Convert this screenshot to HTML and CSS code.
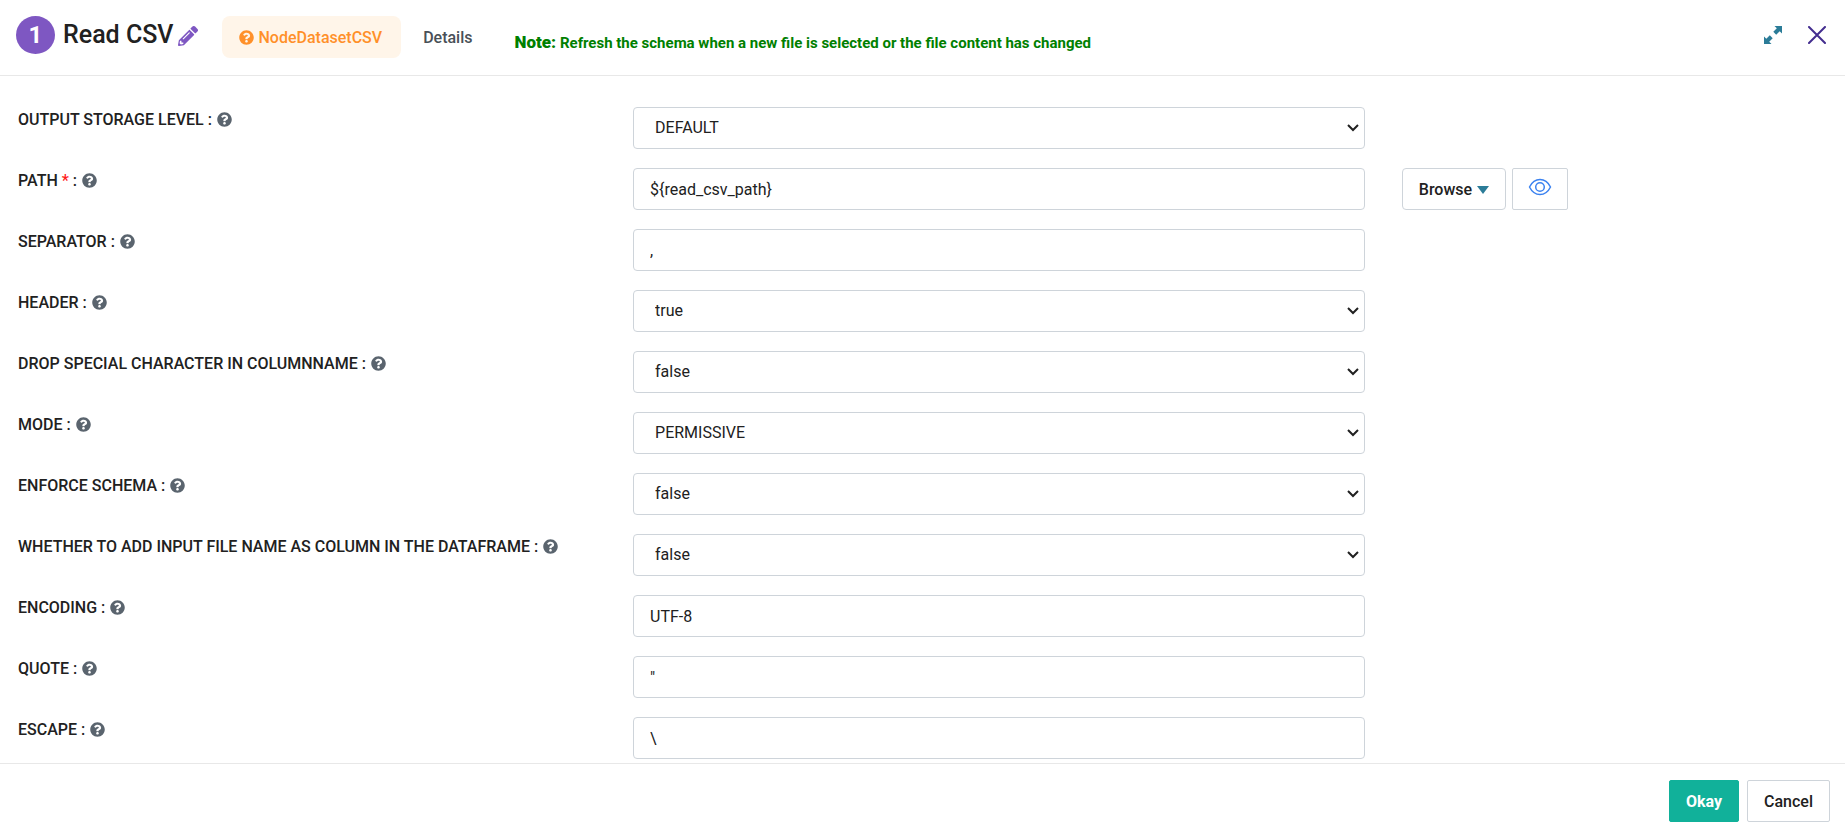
FILE: index.html
```html
<!DOCTYPE html>
<html lang="en">
<head>
<meta charset="utf-8">
<meta name="viewport" content="width=device-width, initial-scale=1">
<title>Read CSV</title>
<link rel="stylesheet" href="styles.css">
</head>
<body>
<svg class="sprite" aria-hidden="true">
  <symbol id="help" viewBox="0 0 512 512"><path fill="currentColor" d="M504 256c0 137-111 248-248 248S8 393 8 256C8 119.100 119 8 256 8s248 111.100 248 248zM262.700 90c-54.500 0-89.300 23-116.500 63.800-3.600 5.300-2.400 12.400 2.700 16.300l34.700 26.300c5.200 3.900 12.600 3 16.700-2.100 17.800-22.600 30.100-35.800 57.300-35.800 20.400 0 45.700 13.100 45.700 33 0 15-12.400 22.700-32.500 34C247.100 238.500 216 254.900 216 296v4c0 6.600 5.400 12 12 12h56c6.600 0 12-5.400 12-12v-1.300c0-28.500 83.200-29.600 83.200-106.700 0-58-60.200-102-116.500-102zM256 338c-25.400 0-46 20.600-46 46s20.600 46 46 46 46-20.600 46-46-20.600-46-46-46z"/></symbol>
</svg>
<main class="dialog">
  <header class="header">
    <span class="badge">1</span>
    <h1 class="title">Read CSV</h1>
    <button class="icon-button edit" type="button" aria-label="Edit name">
      <svg width="20" height="20" viewBox="0 0 512 512"><path fill="currentColor" d="M498 142l-46 46c-5 5-12 5-17 0L324 77c-5-5-5-12 0-17l46-46c19-19 49-19 68 0l60 60c19 19 19 49 0 68zm-214-42L22 362 0 484c-3 16 12 31 28 28l122-22 262-262c5-5 5-12 0-17L301 100c-5-5-12-5-17 0zM124 340c-5-6-5-14 0-20l154-154c6-5 14-5 20 0s5 14 0 20L144 340c-6 5-14 5-20 0zm-36 84h48v36l-64 12-32-32 12-64h36v48z"/></svg>
    </button>
    <nav class="tabs">
      <a class="tab tab-active" href="#node"><svg class="help"><use href="#help"/></svg>NodeDatasetCSV</a>
      <a class="tab" href="#details">Details</a>
    </nav>
    <p class="note"><strong class="note-lead">Note:</strong> Refresh the schema when a new file is selected or the file content has changed</p>
    <div class="window-actions">
      <button class="icon-button expand" type="button" aria-label="Expand">
        <svg width="18" height="18" viewBox="0 0 18 18"><path fill="currentColor" d="M10.500 0H18v7.500l-2.300-2.300-3.500 3.500-2.900-2.900 3.500-3.500zM7.500 18H0v-7.500l2.300 2.300 3.500-3.500 2.900 2.900-3.500 3.500z"/></svg>
      </button>
      <button class="icon-button close" type="button" aria-label="Close">
        <svg width="18" height="18" viewBox="0 0 18 18"><path d="M1 1l16 16M17 1L1 17" fill="none" stroke="currentColor" stroke-width="2" stroke-linecap="round"/></svg>
      </button>
    </div>
  </header>

  <form class="form" id="csv-form">
    <div class="row">
      <label class="label" for="storage">OUTPUT STORAGE LEVEL : <svg class="help"><use href="#help"/></svg></label>
      <select class="field" id="storage"><option>DEFAULT</option></select>
    </div>
    <div class="row">
      <label class="label" for="path">PATH <span class="required">*</span> : <svg class="help"><use href="#help"/></svg></label>
      <input class="field" id="path" type="text" value="${read_csv_path}">
      <div class="row-actions">
        <button class="button browse" type="button">Browse<svg width="12" height="8" viewBox="0 0 12 8"><path fill="#2b7c98" d="M0 0h12L6 8z"/></svg></button>
        <button class="button preview" type="button" aria-label="Preview file">
          <svg width="24" height="18" viewBox="0 0 24 18" fill="none" stroke="#3b82f0" stroke-width="1.500"><path d="M1.500 9C4 4 7.500 1.500 12 1.500S20 4 22.500 9C20 14 16.500 16.500 12 16.500S4 14 1.500 9z"/><circle cx="12" cy="9" r="4.300"/></svg>
        </button>
      </div>
    </div>
    <div class="row">
      <label class="label" for="separator">SEPARATOR : <svg class="help"><use href="#help"/></svg></label>
      <input class="field" id="separator" type="text" value=",">
    </div>
    <div class="row">
      <label class="label" for="has-header">HEADER : <svg class="help"><use href="#help"/></svg></label>
      <select class="field" id="has-header"><option>true</option><option>false</option></select>
    </div>
    <div class="row">
      <label class="label" for="drop-special">DROP SPECIAL CHARACTER IN COLUMNNAME : <svg class="help"><use href="#help"/></svg></label>
      <select class="field" id="drop-special"><option>false</option><option>true</option></select>
    </div>
    <div class="row">
      <label class="label" for="mode">MODE : <svg class="help"><use href="#help"/></svg></label>
      <select class="field" id="mode"><option>PERMISSIVE</option></select>
    </div>
    <div class="row">
      <label class="label" for="enforce">ENFORCE SCHEMA : <svg class="help"><use href="#help"/></svg></label>
      <select class="field" id="enforce"><option>false</option><option>true</option></select>
    </div>
    <div class="row">
      <label class="label" for="add-name">WHETHER TO ADD INPUT FILE NAME AS COLUMN IN THE DATAFRAME : <svg class="help"><use href="#help"/></svg></label>
      <select class="field" id="add-name"><option>false</option><option>true</option></select>
    </div>
    <div class="row">
      <label class="label" for="encoding">ENCODING : <svg class="help"><use href="#help"/></svg></label>
      <input class="field" id="encoding" type="text" value="UTF-8">
    </div>
    <div class="row">
      <label class="label" for="quote">QUOTE : <svg class="help"><use href="#help"/></svg></label>
      <input class="field" id="quote" type="text" value="&quot;">
    </div>
    <div class="row">
      <label class="label" for="escape">ESCAPE : <svg class="help"><use href="#help"/></svg></label>
      <input class="field" id="escape" type="text" value="\">
    </div>
  </form>

  <footer class="footer">
    <button class="button okay" type="submit" form="csv-form">Okay</button>
    <button class="button" type="button">Cancel</button>
  </footer>
</main>
</body>
</html>
```
FILE: styles.css
```css
* {
  box-sizing: border-box;
}

body {
  margin: 0;
  background: #fff;
  color: #212121;
  font: 400 16px/24px Roboto, "Liberation Sans", sans-serif;
}

.sprite {
  display: none;
}

.dialog {
  display: flex;
  flex-direction: column;
  height: 100vh;
}

.header {
  display: flex;
  align-items: flex-start;
  flex-shrink: 0;
  padding: 16px 19px 17px 16px;
  border-bottom: 1px solid #e8e8e8;
}

.badge {
  width: 39px;
  height: 38px;
  border-radius: 50%;
  background: #7e57c2;
  color: #fff;
  font-size: 24px;
  font-weight: 700;
  line-height: 38px;
  text-align: center;
}

.title {
  margin: 0 0 0 8px;
  font-size: 25px;
  font-weight: 500;
  line-height: 38px;
}

.icon-button {
  display: flex;
  padding: 0;
  border: 0;
  background: none;
  cursor: pointer;
}

.edit {
  margin: 10px 24px 0 4px;
  color: #7e57c2;
}

.tabs {
  display: flex;
  gap: 5px;
}

.tab {
  display: flex;
  align-items: center;
  gap: 5px;
  height: 42px;
  padding: 1px 17px 0;
  border-radius: 8px;
  color: #495057;
  font-weight: 500;
  text-decoration: none;
}

.tab-active {
  padding-right: 19px;
  background: #fff5e9;
  color: #ff9029;
}

.note {
  margin: 14px 0 0 25px;
  color: #008000;
  font-size: 15px;
  font-weight: 700;
}

.note-lead {
  font-size: 17px;
}

.window-actions {
  display: flex;
  gap: 26px;
  margin: 10px 0 0 auto;
}

.expand {
  color: #2b7c98;
}

.close {
  color: #432d8f;
}

.help {
  width: 15px;
  height: 15px;
}

.form {
  display: flex;
  flex: 1;
  flex-direction: column;
  gap: 19px;
  min-height: 0;
  padding: 31px 18px 0;
  overflow: hidden;
}

.row {
  display: grid;
  grid-template-columns: 34% 40.45% 1fr;
  align-items: start;
}

.label {
  padding-top: 1px;
  font-weight: 500;
}

.label .help {
  margin-left: 1px;
  color: #5a646e;
  vertical-align: -2px;
}

.required {
  color: #ff1a1a;
}

.field {
  width: 100%;
  height: 42px;
  padding: 0 16px;
  border: 1px solid #ced4da;
  border-radius: 4px;
  background: #fff;
  color: #212121;
  font: inherit;
}

select.field {
  padding: 0 24px 0 21px;
  appearance: none;
  background: #fff url("data:image/svg+xml,%3Csvg xmlns='http://www.w3.org/2000/svg' width='12' height='8' viewBox='0 0 12 8'%3E%3Cpath d='M1 1l5 5 5-5' fill='none' stroke='%23212121' stroke-width='2'/%3E%3C/svg%3E") no-repeat right 5px center;
}

.row-actions {
  display: flex;
  gap: 6px;
  padding-left: 37px;
}

.button {
  display: flex;
  align-items: center;
  justify-content: center;
  height: 42px;
  padding: 1px 16px 0;
  border: 1px solid #ced4da;
  border-radius: 2px;
  background: #fff;
  color: #212121;
  font: inherit;
  font-weight: 500;
  cursor: pointer;
}

.browse {
  gap: 5px;
  border-radius: 4px;
}

.preview {
  padding: 0 15px 4px;
}

.footer {
  display: flex;
  flex-shrink: 0;
  justify-content: flex-end;
  gap: 8px;
  padding: 16px 15px 13px;
  border-top: 1px solid #e8e8e8;
}

.okay {
  border-color: #11b19a;
  background: #11b19a;
  color: #fff;
  font-weight: 700;
}
```
